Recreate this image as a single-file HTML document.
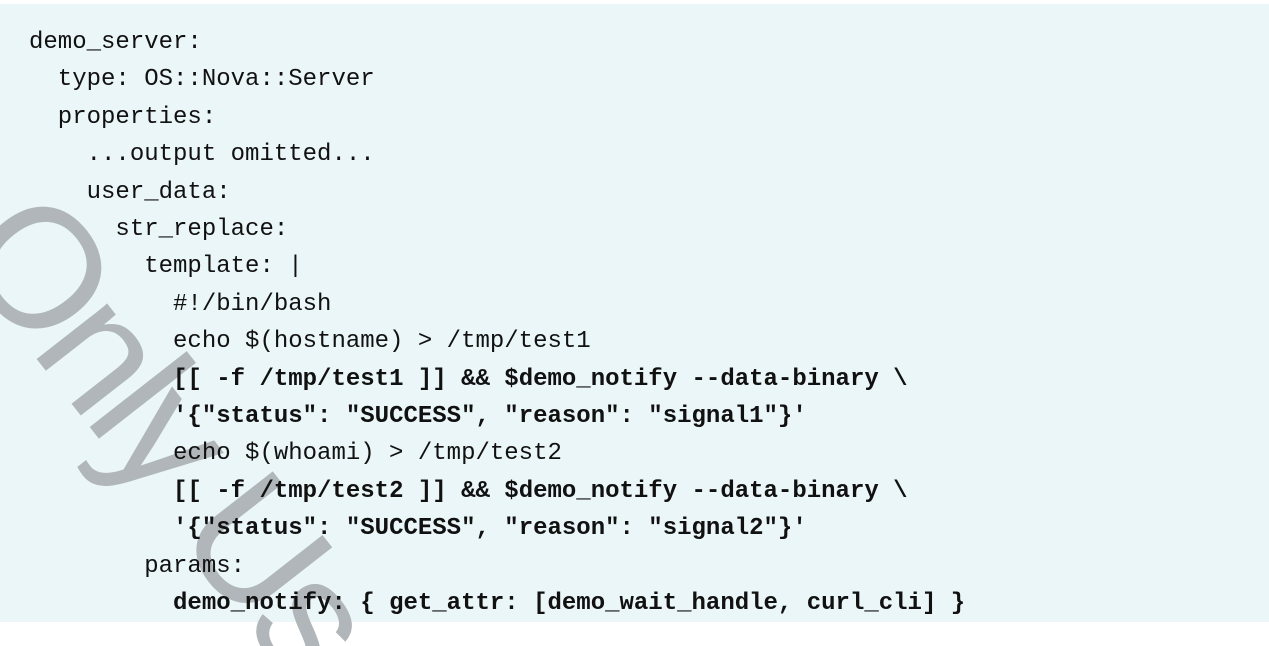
<!DOCTYPE html>
<html><head><style>
html,body{margin:0;padding:0;background:#fff;width:1269px;height:646px;overflow:hidden;position:relative}
.box{position:absolute;left:0;top:4px;width:1269px;height:618px;background:#ebf6f9}
.clip{position:absolute;left:0;top:0;width:1269px;height:646px;overflow:hidden}
pre{position:absolute;left:29px;top:24px;margin:0;font-family:"Liberation Mono",monospace;font-size:24px;line-height:37.4px;color:#111}
b{font-weight:bold}
.wm{position:absolute;left:-55px;top:105px;font-family:"Liberation Sans",sans-serif;font-size:170px;letter-spacing:-8px;color:#b0b6b9;transform-origin:0 153px;transform:rotate(52deg);white-space:nowrap;line-height:1}
</style></head><body>
<div class="box"></div>
<div class="clip"><div class="wm">Only Use</div></div>
<pre>demo_server:
  type: OS::Nova::Server
  properties:
    ...output omitted...
    user_data:
      str_replace:
        template: |
          #!/bin/bash
          echo $(hostname) &gt; /tmp/test1
          <b>[[ -f /tmp/test1 ]] &amp;&amp; $demo_notify --data-binary \</b>
          <b>'{"status": "SUCCESS", "reason": "signal1"}'</b>
          echo $(whoami) &gt; /tmp/test2
          <b>[[ -f /tmp/test2 ]] &amp;&amp; $demo_notify --data-binary \</b>
          <b>'{"status": "SUCCESS", "reason": "signal2"}'</b>
        params:
          <b>demo_notify: { get_attr: [demo_wait_handle, curl_cli] }</b></pre>
</body></html>
